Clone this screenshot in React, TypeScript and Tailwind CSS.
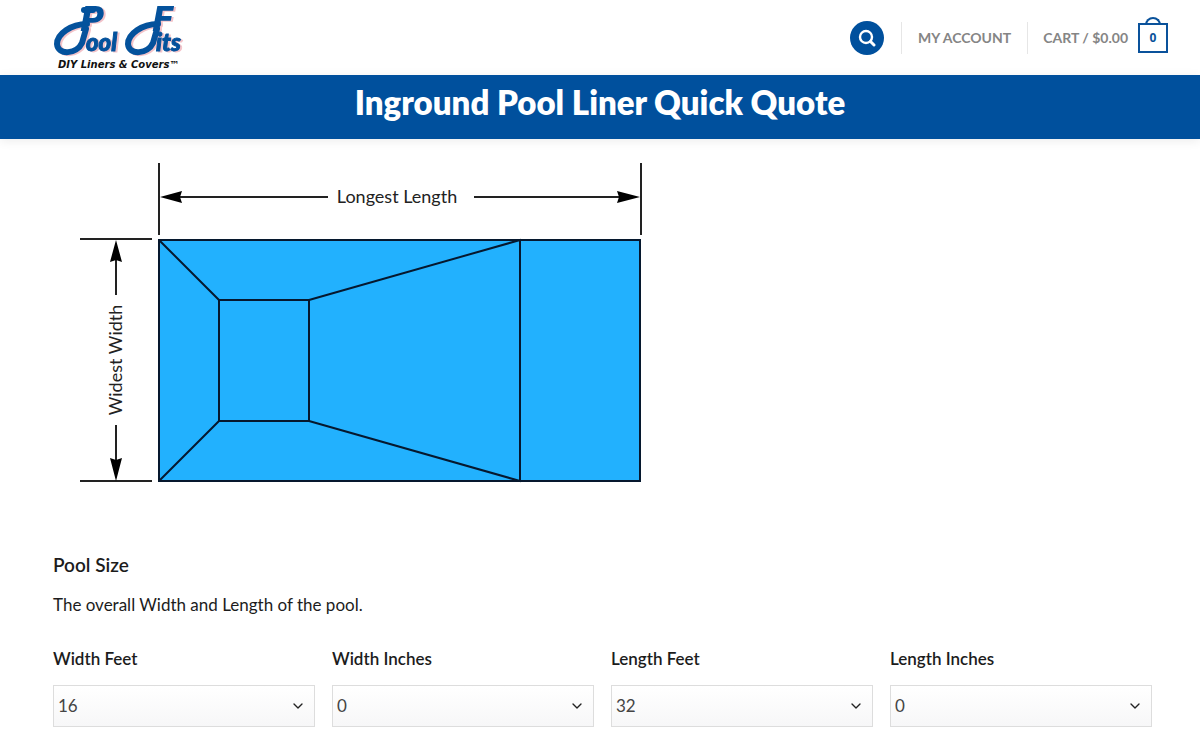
import { useState } from 'react';
import { ChevronDown } from 'lucide-react';

const range = (from: number, to: number) =>
  Array.from({ length: to - from + 1 }, (_, i) => from + i);

const sizeFields = [
  { id: 'width-feet', label: 'Width Feet', initial: 16, options: range(8, 40) },
  { id: 'width-inches', label: 'Width Inches', initial: 0, options: range(0, 11) },
  { id: 'length-feet', label: 'Length Feet', initial: 32, options: range(12, 60) },
  { id: 'length-inches', label: 'Length Inches', initial: 0, options: range(0, 11) },
];

const Logo = () => (
  <a href="#" aria-label="Pool Fits">
    <svg width="134" height="75" viewBox="0 0 134 75" className="block overflow-visible">
      <g fill="#04529c" className="drop-shadow-[2px_1px_0_#f3c3c9]">
        {/* Swashes behind the two capitals */}
        <g fill="none" stroke="#04529c" strokeWidth="6" strokeLinecap="round">
          <path d="M34 24 C18 24 4 34 4 44 C5 56 24 54 29 43 L33 29" />
          <path d="M105 24 C89 24 75 34 75 44 C76 56 95 54 100 43 L104 29" />
          <path d="M31 10 H40" />
        </g>
        <g fontFamily="'DejaVu Sans', sans-serif" fontWeight="700" fontStyle="italic" fontSize="33">
          <text x="27" y="31">P</text>
          <text x="99" y="31">F</text>
        </g>
        <g
          fontFamily="Lato, sans-serif"
          fontWeight="900"
          fontStyle="italic"
          fontSize="24"
          stroke="#04529c"
          strokeWidth="1"
        >
          <text x="33" y="51">ool</text>
          <text x="103" y="51">its</text>
        </g>
      </g>
      <text
        x="5"
        y="68"
        fontFamily="'DejaVu Sans', sans-serif"
        fontWeight="700"
        fontStyle="italic"
        fontSize="10"
        fill="#111"
      >
        DIY Liners &amp; Covers™
      </text>
    </svg>
  </a>
);

const Header = () => (
  <header className="flex h-[75px] items-center justify-between pr-8 pl-[53px]">
    <Logo />
    <div className="flex items-center text-sm font-bold text-[#858585]">
      <button
        aria-label="Search"
        className="flex size-[34px] items-center justify-center rounded-full bg-[#00509d] text-white"
      >
        <svg width="18" height="18" viewBox="0 0 18 18" fill="none" stroke="currentColor" strokeLinecap="round">
          <circle cx="8" cy="8" r="6" strokeWidth="2.4" />
          <path d="M12.5 12.5 L16 16" strokeWidth="3" />
        </svg>
      </button>
      <a href="#" className="ml-[17px] flex h-8 items-center border-l border-[#e6e6e6] pl-4">
        MY ACCOUNT
      </a>
      <a href="#" className="ml-4 flex h-8 items-center border-l border-[#e6e6e6] pl-[15px]">
        CART / $0.00
        <span className="relative ml-[10px] flex size-[30px] items-center justify-center border-2 border-[#0a529b] font-['Open_Sans',sans-serif] text-xs text-[#0a529b]">
          <span className="absolute -top-2 h-2 w-4 rounded-t-full border-2 border-b-0 border-[#0a529b]" />
          0
        </span>
      </a>
    </div>
  </header>
);

const PoolDiagram = () => (
  <svg
    width="564"
    height="324"
    viewBox="80 160 564 324"
    className="block"
    role="img"
    aria-label="Pool length and width"
  >
    <path d="M159 240 H640 V481 H159 Z" fill="#22b1fe" />
    <g fill="none" stroke="#06182e" strokeWidth="2">
      <path d="M159 240 H640 V481 H159 Z" />
      <path d="M219 300 H309 V421 H219 Z" />
      <path d="M159 240 L219 300 M159 481 L219 421 M309 300 L520 240 V481 L309 421" />
    </g>
    <g fill="none" stroke="#222" strokeWidth="2">
      <path d="M159 163 V235 M641 163 V235" />
      <path d="M80 239 H152 M80 481 H152" />
      <path d="M180 197 H328 M474 197 H620" />
      <path d="M116 260 V295 M116 425 V460" />
    </g>
    <g fill="#000">
      <path d="M160 197 L182 191 L180 197 L182 203 Z" />
      <path d="M640 197 L617 191 L619 197 L617 203 Z" />
      <path d="M116 240 L122 262 L116 260 L110 262 Z" />
      <path d="M116 481 L122 458 L116 460 L110 458 Z" />
    </g>
    <g fontFamily="Lato, sans-serif" fontSize="18" fill="#222" textAnchor="middle">
      <text x="397" y="203">Longest Length</text>
      <text transform="translate(122 360) rotate(-90)">Widest Width</text>
    </g>
  </svg>
);

const App = () => {
  const [size, setSize] = useState<Record<string, number>>(
    Object.fromEntries(sizeFields.map((f) => [f.id, f.initial])),
  );

  return (
    <div className="bg-white font-['Lato',sans-serif] text-[#1c1c1c]">
      <Header />

      <div className="h-16 bg-[#00509d] pt-1 text-center shadow-[0_2px_10px_rgba(0,0,0,0.08)]">
        <h1 className="text-[33px] leading-[46px] font-extrabold text-white">
          Inground Pool Liner Quick Quote
        </h1>
      </div>

      <main className="pr-12 pb-[3px] pl-[53px]">
        <div className="pt-[21px] pl-[27px]">
          <PoolDiagram />
        </div>

        <h2 className="mt-[67px] text-[19px] leading-7 font-semibold">Pool Size</h2>
        <p className="mt-3 text-[17px] leading-7">The overall Width and Length of the pool.</p>

        <div className="mt-6 grid grid-cols-4 gap-[17px]">
          {sizeFields.map((field) => (
            <div key={field.id}>
              <label htmlFor={field.id} className="block text-[17px] leading-8 font-semibold">
                {field.label}
              </label>
              <div className="relative mt-[10px]">
                <select
                  id={field.id}
                  value={size[field.id]}
                  onChange={(e) => setSize({ ...size, [field.id]: Number(e.target.value) })}
                  className="h-[42px] w-full appearance-none border border-[#dddddd] bg-linear-to-b from-white to-[#f7f7f8] px-1 text-[17px] text-[#444444]"
                >
                  {field.options.map((n) => (
                    <option key={n}>{n}</option>
                  ))}
                </select>
                <ChevronDown
                  size={16}
                  className="pointer-events-none absolute top-[13px] right-[9px] text-[#222222]"
                />
              </div>
            </div>
          ))}
        </div>
      </main>
    </div>
  );
};

export default App;
